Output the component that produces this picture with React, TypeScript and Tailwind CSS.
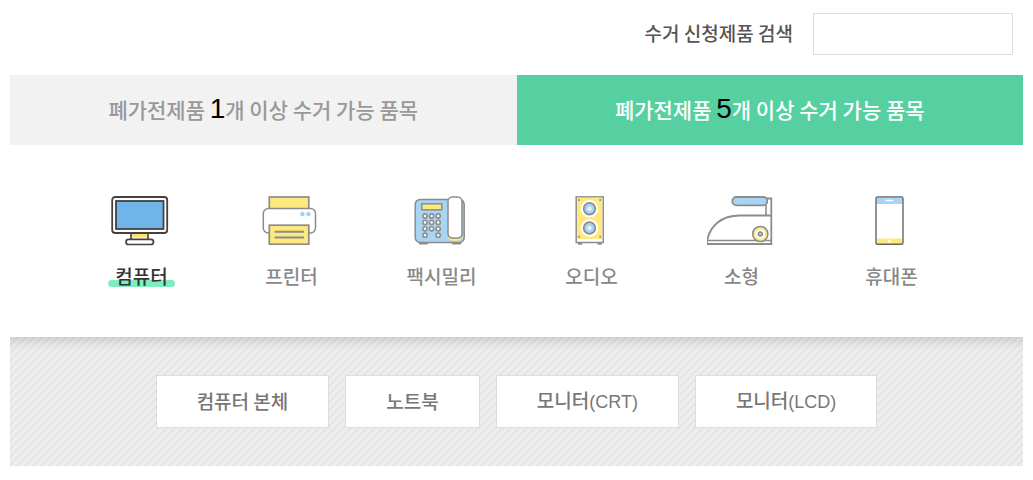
import { useState, type ReactNode } from "react";

const GRAY = "#8c8c8c";

function ComputerIcon() {
  return (
    <svg viewBox="1 0 70 52" className="h-[52px] w-[70px]" fill="none" stroke="#444140" aria-hidden="true">
      <rect x="25" y="38" width="17" height="7" fill="#fff" strokeWidth="1.6" />
      <rect x="26" y="39" width="15" height="3.5" fill="#fde26a" stroke="none" />
      <rect x="6.2" y="2" width="55" height="36" rx="3" fill="#fff" strokeWidth="1.8" />
      <rect x="10" y="6" width="47.5" height="28" fill="#70b5ea" strokeWidth="1.8" />
      <rect x="20" y="44.3" width="27.5" height="5.2" rx="2.6" fill="#fff" strokeWidth="1.7" />
    </svg>
  );
}

function PrinterIcon() {
  return (
    <svg viewBox="1 0 70 52" className="h-[52px] w-[70px]" fill="none" stroke={GRAY} strokeWidth="1.7" aria-hidden="true">
      <rect x="13.3" y="2" width="39.5" height="13" fill="#fee97e" />
      <rect x="7.3" y="13.6" width="52.2" height="24.4" rx="5" fill="#fff" strokeWidth="1.5" />
      <circle cx="46.4" cy="19" r="2.3" fill="#a6d2f2" stroke="none" />
      <circle cx="52.4" cy="19" r="2.3" fill="#a6d2f2" stroke="none" />
      <rect x="13.3" y="30.2" width="39.5" height="19" fill="#fee97e" />
      <path d="M18.7 36.8H48M18.7 42.4H48" strokeWidth="2" />
    </svg>
  );
}

function FaxIcon() {
  const keys = [
    [19, 21], [25.6, 21], [32.2, 21],
    [19, 27.4], [25.6, 27.4], [32.2, 27.4],
    [19, 33.8], [25.6, 33.8], [32.2, 33.8],
    [19, 40.2], [32.2, 40.2],
  ];
  return (
    <svg viewBox="1 0 70 52" className="h-[52px] w-[70px]" fill="none" stroke={GRAY} strokeWidth="1.5" aria-hidden="true">
      <path d="M14 48.2h7M47 48.2h7" strokeWidth="2.6" strokeLinecap="round" />
      <rect x="9.2" y="4.4" width="49" height="43" rx="5" fill="#aad4f3" />
      <rect x="15.8" y="8.8" width="20" height="6" fill="#fee97e" />
      {keys.map(([x, y]) => (
        <circle key={`${x}-${y}`} cx={x} cy={y} r="2.1" fill="#fff" strokeWidth="1.6" />
      ))}
      <path d="M41.5 41.5q1.5 4.2 5 4.2h5q3.5 0 5-4.2z" fill="#fee97e" stroke="none" />
      <rect x="42" y="2" width="14" height="41" rx="4.5" fill="#fff" strokeWidth="1.5" />
    </svg>
  );
}

function SpeakerIcon() {
  return (
    <svg viewBox="1 0 70 52" className="h-[52px] w-[70px]" fill="none" stroke={GRAY} aria-hidden="true">
      <path d="M22 48.7h4.2M41.5 48.7h4.2" strokeWidth="2.2" />
      <rect x="20.2" y="1.9" width="27" height="45.6" fill="#fff" strokeWidth="1.5" />
      <rect x="21.2" y="2.8" width="25" height="41.2" fill="#fee97e" stroke="none" />
      {[13.7, 33].map((y) => (
        <g key={y}>
          <circle cx="33.5" cy={y} r="8.8" fill="#fff" stroke="none" />
          <circle cx="33.5" cy={y} r="5.8" fill="#a9d3f2" strokeWidth="1.8" />
          <circle cx="33.5" cy={y} r="2.2" fill="#e6f3fc" stroke="none" />
        </g>
      ))}
      <g fill={GRAY} stroke="none">
        <circle cx="23" cy="5" r="1" />
        <circle cx="44.2" cy="5" r="1" />
        <circle cx="23" cy="41.7" r="1" />
        <circle cx="44.2" cy="41.7" r="1" />
      </g>
    </svg>
  );
}

function IronIcon() {
  return (
    <svg viewBox="1 0 70 52" className="h-[52px] w-[70px]" fill="none" stroke={GRAY} strokeWidth="1.8" aria-hidden="true">
      <path d="M60 3.5h5.3V49H1v-2.5C3.5 31 15 20.5 34 20.5h31" />
      <path d="M60 10v10.5M1.5 45.5h63.5" strokeWidth="1.6" />
      <rect x="26.3" y="2" width="35" height="8.4" rx="4.2" fill="#aad4f3" />
      <circle cx="54.3" cy="39" r="7.6" fill="#fee97e" strokeWidth="1.5" />
      <circle cx="54.3" cy="39" r="4.8" fill="#fff" stroke="none" />
      <circle cx="54.3" cy="39" r="2" fill="#9fcdf0" strokeWidth="1.5" />
    </svg>
  );
}

function PhoneIcon() {
  return (
    <svg viewBox="1 0 70 52" className="h-[52px] w-[70px]" fill="none" aria-hidden="true">
      <rect x="20" y="1.8" width="27" height="47.6" rx="1.5" fill="#fff" />
      <path d="M20.5 2h26v7h-26z" fill="#aad4f3" />
      <path d="M20.5 43.5h26V49h-26z" fill="#fee97e" />
      <path d="M30 5.5h6.5" stroke="#fff" strokeWidth="1.5" strokeLinecap="round" />
      <circle cx="33.3" cy="46.3" r="1.5" fill="#fff" />
      <rect x="20" y="1.9" width="27" height="47.4" rx="1.5" stroke="#666" strokeWidth="1.4" />
    </svg>
  );
}

const categories: { name: string; icon: ReactNode }[] = [
  { name: "컴퓨터", icon: <ComputerIcon /> },
  { name: "프린터", icon: <PrinterIcon /> },
  { name: "팩시밀리", icon: <FaxIcon /> },
  { name: "오디오", icon: <SpeakerIcon /> },
  { name: "소형", icon: <IronIcon /> },
  { name: "휴대폰", icon: <PhoneIcon /> },
];

const products = [
  { name: "컴퓨터 본체" },
  { name: "노트북" },
  { name: "모니터", type: "(CRT)" },
  { name: "모니터", type: "(LCD)" },
];

const tabs = [1, 5];

export default function App() {
  const [tab, setTab] = useState(5);
  const [category, setCategory] = useState("컴퓨터");

  return (
    <main className="bg-white px-[10px] pb-[14px] font-['Noto_Sans_CJK_KR',sans-serif] text-[19px] leading-7 font-medium">
      <form className="flex items-center justify-end gap-5 pt-[13px] pr-[10px] pb-5">
        <label htmlFor="product-search" className="pb-[2px] text-[#555]">수거 신청제품 검색</label>
        <input
          id="product-search"
          type="text"
          className="h-[42px] w-[200px] border border-[#ddd] bg-white px-3 outline-none"
        />
      </form>

      <div role="tablist" className="grid grid-cols-2">
        {tabs.map((count) => (
          <button
            key={count}
            type="button"
            role="tab"
            aria-selected={tab === count}
            onClick={() => setTab(count)}
            className={`h-[70px] pb-[2px] text-[21px] ${tab === count ? "bg-[#56d0a0] text-white" : "bg-[#f2f2f2] text-[#999]"}`}
          >
            폐가전제품{" "}
            <span className="font-['Liberation_Sans',sans-serif] text-[28px] font-normal text-black">{count}</span>
            개 이상 수거 가능 품목
          </button>
        ))}
      </div>

      <div className="flex justify-center pt-[50px] pb-[47px]">
        {categories.map(({ name, icon }) => (
          <button
            key={name}
            type="button"
            aria-pressed={category === name}
            onClick={() => setCategory(name)}
            className="flex w-[150px] flex-col items-center gap-[15px]"
          >
            {icon}
            <span className={`relative isolate px-[7px] ${category === name ? "text-[#333]" : "text-[#888]"}`}>
              {category === name && (
                <span className="absolute inset-x-0 bottom-[3px] -z-10 h-[7px] rounded-full bg-[#80edc1]" />
              )}
              {name}
            </span>
          </button>
        ))}
      </div>

      <section className="flex flex-wrap justify-center gap-4 bg-[#ededed] bg-[linear-gradient(135deg,transparent_44%,#d8d8d8_50%,transparent_56%)] bg-[length:8px_8px] pt-[38px] pb-[38px] shadow-[inset_0_12px_12px_-8px_rgba(0,0,0,0.14)]">
        {products.map(({ name, type }) => (
          <button
            key={name + (type ?? "")}
            type="button"
            className="h-[53px] border border-[#ddd] bg-white px-10 pb-[2px] text-[#777]"
          >
            {name}
            {type && <span className="font-['Liberation_Sans',sans-serif] text-[18px] font-normal">{type}</span>}
          </button>
        ))}
      </section>
    </main>
  );
}
